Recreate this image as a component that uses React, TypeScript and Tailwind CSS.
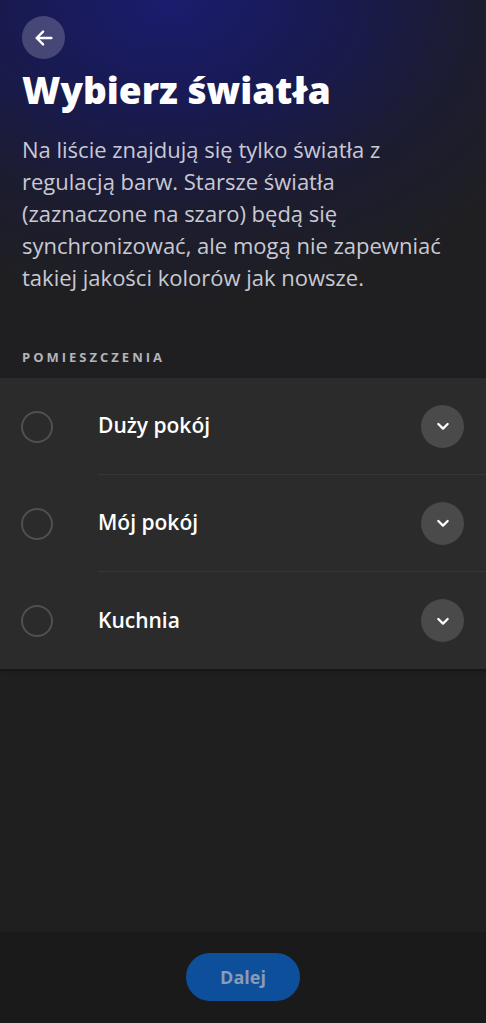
import React from 'react';

const rooms = ['Duży pokój', 'Mój pokój', 'Kuchnia'];

const ChevronDown: React.FC = () => (
  <svg width="16" height="16" viewBox="0 0 24 24" fill="none" stroke="white" strokeWidth="3.4" strokeLinecap="round" strokeLinejoin="round">
    <path d="M5 9l7 7 7-7" />
  </svg>
);

const ArrowLeft: React.FC = () => (
  <svg width="22" height="22" viewBox="0 0 24 24" fill="none" stroke="white" strokeWidth="2.6" strokeLinecap="round" strokeLinejoin="round">
    <path d="M20 12H4M11 5l-7 7 7 7" />
  </svg>
);

const App: React.FC = () => {
  return (
    <div className="w-full min-h-[1023px] flex flex-col bg-[#1f1f1f] font-['Open_Sans',sans-serif]">
      {/* Header with navy glow */}
      <div className="flex flex-col px-[22px] pt-4 pb-3 bg-[radial-gradient(ellipse_90%_80%_at_35%_0%,#1b1c6e_0%,#181a52_35%,#1c1c30_70%,#1f1f22_100%)]">
        <button className="w-[43px] h-[43px] rounded-full bg-white/20 flex items-center justify-center">
          <ArrowLeft />
        </button>
        <h1 className="mt-[9px] text-[37px] leading-[44px] font-extrabold text-white">
          Wybierz światła
        </h1>
        <p className="mt-[21px] text-[22px] leading-[32px] text-[#c9c9d2]">
          Na liście znajdują się tylko światła z<br />
          regulacją barw. Starsze światła<br />
          (zaznaczone na szaro) będą się<br />
          synchronizować, ale mogą nie zapewniać<br />
          takiej jakości kolorów jak nowsze.
        </p>
        <div className="mt-[55px] text-[13px] leading-[18px] font-bold tracking-[3px] text-[#b4b4b8]">
          POMIESZCZENIA
        </div>
      </div>

      {/* Room list */}
      <div className="bg-[#2b2b2b] shadow-[0_2px_3px_rgba(0,0,0,0.35)]">
        {rooms.map((room, i) => (
          <div key={room} className="flex items-stretch h-[97px]">
            <div className="w-[98px] flex items-center pl-[21px]">
              <div className="w-8 h-8 rounded-full border-2 border-[#505050]" />
            </div>
            <div className={`flex-1 flex items-center pr-[22px] ${i < rooms.length - 1 ? 'border-b border-[#363636]' : ''}`}>
              <span className="flex-1 text-[21px] font-semibold text-white">{room}</span>
              <div className="w-[43px] h-[43px] rounded-full bg-[#4a4a4a] flex items-center justify-center">
                <ChevronDown />
              </div>
            </div>
          </div>
        ))}
      </div>

      <div className="flex-1" />

      {/* Bottom bar */}
      <div className="h-[91px] bg-[#1a1a1a] flex justify-center pt-[21px]">
        <button className="w-[114px] h-[48px] rounded-full bg-[#0e4f9c] text-[#8a9bb5] text-[18px] font-bold">
          Dalej
        </button>
      </div>
    </div>
  );
};

export default App;
